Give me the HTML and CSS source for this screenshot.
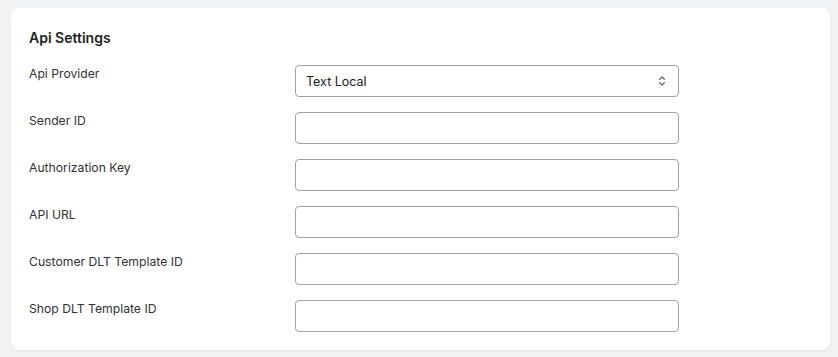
FILE: index.html
```html
<!DOCTYPE html>
<html>
<head>
  <title>Api Settings</title>
  <link rel="stylesheet" href="styles.css">
</head>
<body>

  <div class="card">
    <h2 class="card-title">Api Settings</h2>

    <form class="settings-form">
      <label for="api-provider">Api Provider</label>
      <div class="select-wrap">
        <select id="api-provider">
          <option>Text Local</option>
        </select>
        <svg class="select-icon" viewBox="0 0 20 20" width="16" height="16">
          <path d="M7 8l3-3 3 3M7 12l3 3 3-3" fill="none" stroke="#5c5f62" stroke-width="1.5" stroke-linecap="round" stroke-linejoin="round"/>
        </svg>
      </div>

      <label for="sender-id">Sender ID</label>
      <input type="text" id="sender-id">

      <label for="auth-key">Authorization Key</label>
      <input type="text" id="auth-key">

      <label for="api-url">API URL</label>
      <input type="text" id="api-url">

      <label for="customer-template">Customer DLT Template ID</label>
      <input type="text" id="customer-template">

      <label for="shop-template">Shop DLT Template ID</label>
      <input type="text" id="shop-template">
    </form>
  </div>

</body>
</html>
```

FILE: styles.css
```css
body {
    font-family: Inter, "Noto Sans", sans-serif;
    margin: 0;
    padding: 8px 8px 7px 11px;
    background-color: #f1f2f4;
    color: #202223;
}

.card {
    background-color: #ffffff;
    border-radius: 8px;
    padding: 20px 18px 18px;
    box-shadow: 0 1px 2px rgba(0, 0, 0, 0.08);
}

.card-title {
    font-size: 14px;
    font-weight: 600;
    line-height: 20px;
    margin: 0 0 17px;
}

.settings-form {
    display: grid;
    grid-template-columns: 266px 384px;
    row-gap: 15px;
}

.settings-form label {
    font-size: 12.2px;
    line-height: 18px;
    color: #303236;
}

.settings-form input,
.settings-form select {
    width: 100%;
    height: 32px;
    box-sizing: border-box;
    border: 1px solid #9fa2aa;
    border-radius: 4px;
    background-color: #ffffff;
    font-family: inherit;
    font-size: 12.5px;
    color: #202223;
    padding: 0 10px;
    margin: 0;
}

.select-wrap {
    position: relative;
}

.settings-form select {
    appearance: none;
    -webkit-appearance: none;
}

.select-icon {
    position: absolute;
    right: 9px;
    top: 8px;
    pointer-events: none;
}
```
